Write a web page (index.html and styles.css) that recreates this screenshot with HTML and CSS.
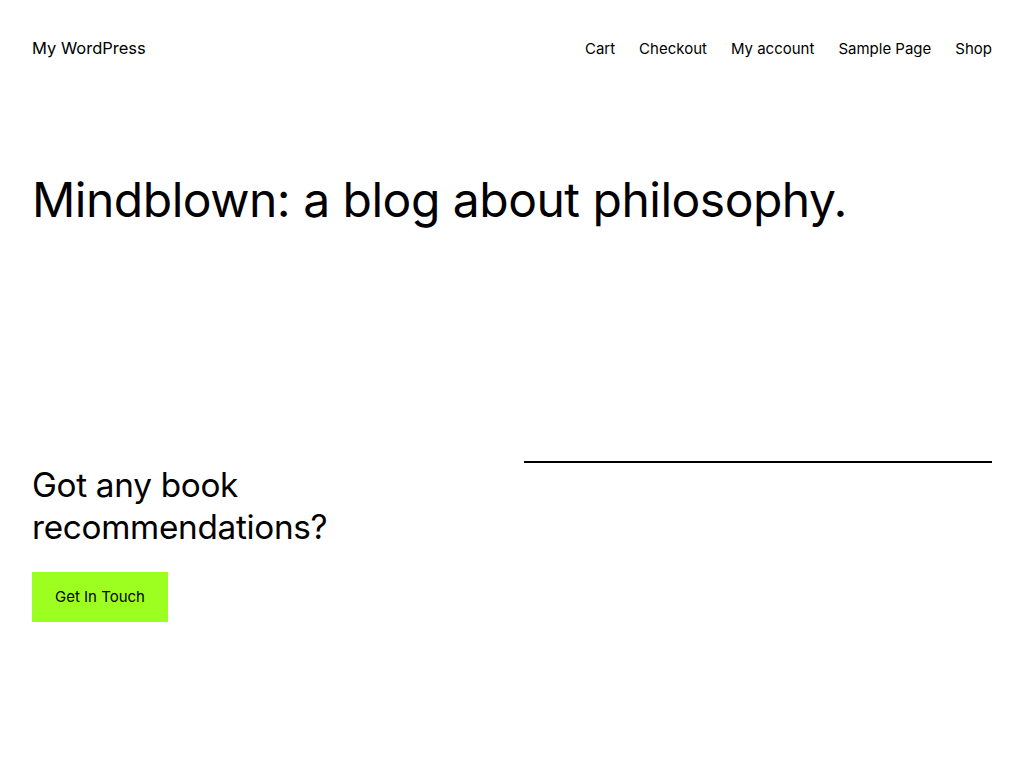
FILE: index.html
```html
<!DOCTYPE html>
<html lang="en">
<head>
<meta charset="utf-8">
<title>My WordPress</title>
<link rel="stylesheet" href="styles.css">
</head>
<body>
<header class="site-header">
  <a class="site-title" href="#">My WordPress</a>
  <nav class="site-nav">
    <a href="#">Cart</a>
    <a href="#">Checkout</a>
    <a href="#">My account</a>
    <a href="#">Sample Page</a>
    <a href="#">Shop</a>
  </nav>
</header>
<main class="main">
  <h1 class="page-title">Mindblown: a blog about philosophy.</h1>
  <section class="cta">
    <div class="cta-left">
      <h2 class="cta-heading">Got any book recommendations?</h2>
      <a class="cta-button" href="#">Get In Touch</a>
    </div>
    <div class="cta-right">
      <hr class="separator">
    </div>
  </section>
</main>
</body>
</html>
```
FILE: styles.css
```css
* { box-sizing: border-box; }
html, body { margin: 0; padding: 0; background: #fff; }
body {
  font-family: Inter, "Noto Sans", sans-serif;
  color: #000;
  font-size: 16px;
}
a { color: #000; text-decoration: none; }
.site-header {
  display: flex;
  justify-content: space-between;
  align-items: center;
  padding: 37px 32px 0;
  height: 60px;
}
.site-title { font-size: 16.5px; line-height: 22px; margin-top: -1px; }
.site-nav { display: flex; gap: 24px; font-size: 15px; line-height: 22px; }
.main { padding: 0 32px; }
.page-title {
  margin: 108px 0 0;
  font-weight: 400;
  font-size: 48px;
  line-height: 64px;
  letter-spacing: -0.5px;
}
.cta {
  display: flex;
  gap: 24px;
  margin-top: 232px;
}
.cta-left { flex: 1; }
.cta-right { flex: 1; }
.cta-heading {
  margin: 0;
  font-weight: 400;
  font-size: 33.3px;
  line-height: 42px;
  letter-spacing: -0.3px;
}
.cta-button {
  display: inline-block;
  margin-top: 24px;
  background: #9dff20;
  font-size: 15px;
  line-height: 20px;
  padding: 15px 23px;
}
.separator {
  margin: 0;
  border: 0;
  border-top: 2px solid #000;
  margin-top: -3px;
}
```
